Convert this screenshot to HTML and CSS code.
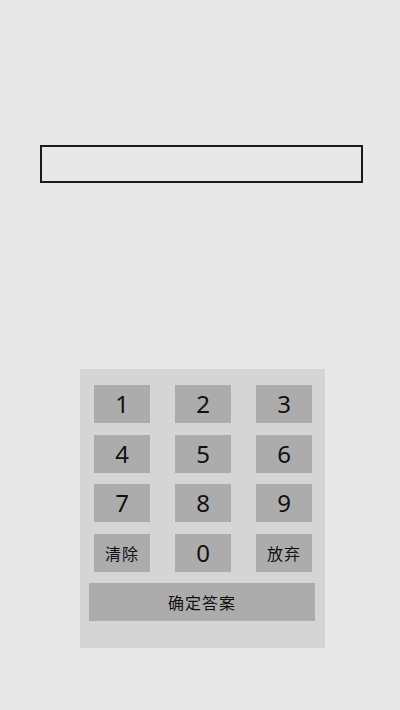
FILE: index.html
```html
<!DOCTYPE html>
<html lang="zh-CN">
<head>
  <meta charset="UTF-8">
  <meta name="viewport" content="width=device-width, initial-scale=1">
  <title>答题</title>
  <link rel="stylesheet" href="styles.css">
</head>
<body>

  <!-- ANSWER BOX -->
  <div class="answer"></div>

  <!-- KEYPAD -->
  <div class="keypad">
    <div class="keys">
      <button class="key">1</button>
      <button class="key">2</button>
      <button class="key">3</button>
      <button class="key">4</button>
      <button class="key">5</button>
      <button class="key">6</button>
      <button class="key">7</button>
      <button class="key">8</button>
      <button class="key">9</button>
      <button class="key cn">清除</button>
      <button class="key">0</button>
      <button class="key cn">放弃</button>
      <button class="key cn submit">确定答案</button>
    </div>
  </div>

</body>
</html>
```

FILE: styles.css
```css
/* BASE */
* { margin: 0; padding: 0; box-sizing: border-box; }
html, body { height: 100%; }
body {
  background: #e8e8e8;
  font-family: "Noto Sans", Roboto, "Noto Sans CJK SC", sans-serif;
  color: #111;
  padding-top: 145px;
}

/* ANSWER BOX */
.answer {
  margin-left: 40px;
  width: 323px;
  height: 38px;
  border: 2px solid #1a1a1a;
}

/* KEYPAD */
.keypad {
  margin: 186px 0 0 80px;
  width: 245px;
  height: 279px;
  background: #d5d5d5;
  padding: 16px 13px 0 14px;
}
.keys {
  display: grid;
  grid-template-columns: repeat(3, 56px);
  grid-auto-rows: 38px;
  column-gap: 25px;
  row-gap: 11.5px;
}
.key {
  border: none;
  background: #acacac;
  color: #111;
  font-family: "Noto Sans", Roboto, sans-serif;
  font-size: 24px;
  line-height: 38px;
}
.key.cn {
  font-family: "Noto Sans CJK SC", sans-serif;
  font-size: 16px;
  letter-spacing: 1px;
}
.submit {
  grid-column: 1 / -1;
  margin: 0 -3px 0 -5px;
}
```
